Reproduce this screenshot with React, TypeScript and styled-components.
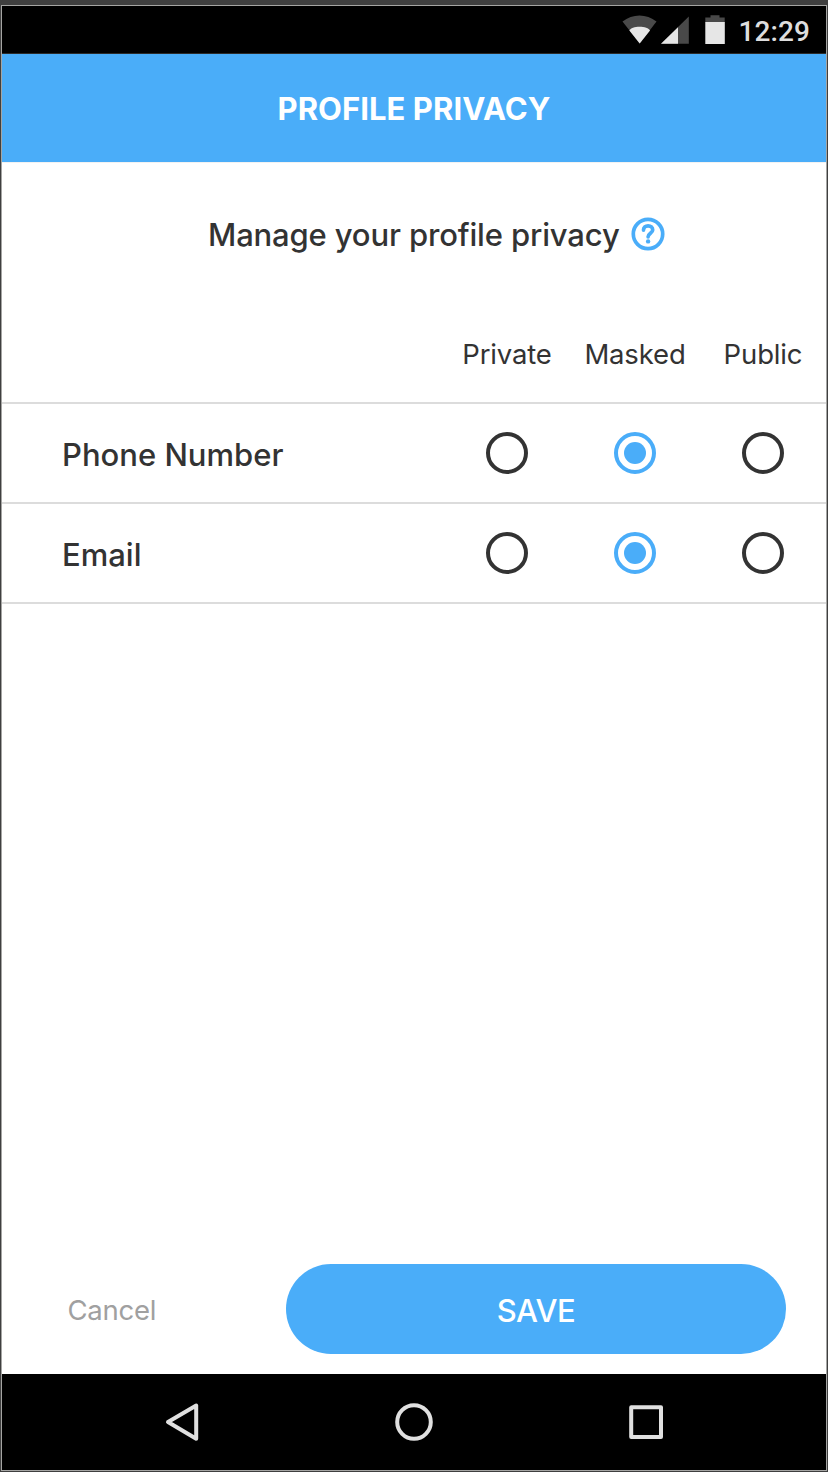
import React, { useState } from "react";
import styled, { createGlobalStyle } from "styled-components";

const BLUE = "#4aadf9";
const INK = "#333333";

const GlobalStyle = createGlobalStyle`
  * { box-sizing: border-box; }
  body { margin: 0; background: #3f3f3f; font-family: Inter, "Liberation Sans", sans-serif; color: ${INK}; }
  button { font: inherit; border: 0; padding: 0; background: none; cursor: pointer; }
`;

const Backdrop = styled.div`
  width: 828px;
  height: 1472px;
  padding: 5px 1px 1px;
  background: #3f3f3f;
  overflow: hidden;
`;

const Screen = styled.div`
  display: flex;
  flex-direction: column;
  height: 1466px;
  border: 1px solid #a5a5a3;
  background: #ffffff;
`;

const StatusBar = styled.div`
  display: flex;
  height: 48px;
  padding-left: 620px;
  background: #000000;
  border-bottom: 1px solid #2b2b2b;
`;

const Clock = styled.span`
  font-family: Roboto, sans-serif;
  font-weight: 500;
  font-size: 28px;
  line-height: 51px;
  letter-spacing: 0.1px;
  color: #dedede;
  margin-left: 10.5px;
`;

const Header = styled.header`
  display: flex;
  height: 109px;
  align-items: center;
  justify-content: center;
  background: ${BLUE};
  border-bottom: 1px solid #f2f2f2;
`;

const Label = styled.span<{ $size: number; $weight?: number; $spacing?: number; $color?: string; $drop?: number }>`
  display: block;
  font-size: ${(p) => p.$size}px;
  font-weight: ${(p) => p.$weight ?? 400};
  letter-spacing: ${(p) => p.$spacing ?? 0}px;
  color: ${(p) => p.$color ?? INK};
  line-height: 40px;
  padding-top: ${(p) => p.$drop ?? 0}px;
  white-space: nowrap;
`;

const Body = styled.main`
  display: flex;
  flex-direction: column;
  flex: 1;
`;

const Intro = styled.div`
  display: flex;
  align-items: center;
  gap: 11px;
  height: 142px;
  margin-bottom: 1px;
  padding-left: 206px;
`;

const Row = styled.div<{ $height: number }>`
  display: flex;
  align-items: center;
  justify-content: space-between;
  height: ${(p) => p.$height}px;
  padding: 0 42px 0 60px;
  border-bottom: 2px solid #dcdcdc;
`;

const Options = styled.div`
  display: flex;
  gap: 86px;
  margin-left: auto;
`;

const Cell = styled.div`
  display: flex;
  justify-content: center;
  width: 42px;
`;

const Radio = styled.button<{ $on: boolean }>`
  display: grid;
  place-items: center;
  width: 42px;
  height: 42px;
  border: 4px solid ${(p) => (p.$on ? BLUE : INK)};
  border-radius: 50%;
  &::after {
    content: "";
    width: 22px;
    height: 22px;
    border-radius: 50%;
    background: ${(p) => (p.$on ? BLUE : "transparent")};
  }
`;

const Actions = styled.div`
  display: flex;
  justify-content: space-between;
  align-items: center;
  margin-top: auto;
  padding: 0 40px 20px 65.5px;
`;

const SaveButton = styled.button`
  width: 500px;
  height: 90px;
  border-radius: 45px;
  background: ${BLUE};
`;

const NavBar = styled.nav`
  height: 96px;
  background: #000000;
`;

const StatusIcons = () => (
  <svg width="106" height="47" viewBox="622 6 106 47">
    <path d="M622.5 21.5C632.5 13.5 646.5 13.5 656.5 21.5L639.7 43.5Z" fill="#494949" />
    <path d="M629.4 30.6C631 25.5 648 25.5 650 30.6L639.7 43.5Z" fill="#e6e6e6" />
    <path d="M688.8 16.5V43.8H661Z" fill="#494949" />
    <path d="M678 27.2V43.8H661Z" fill="#e6e6e6" />
    <path d="M710.5 15.2h9v2.2h5.2v5h-19.4v-5h5.2Z" fill="#494949" />
    <rect x="705.3" y="22" width="19.5" height="22" fill="#e6e6e6" />
  </svg>
);

const HelpIcon = () => (
  <svg width="34" height="34" viewBox="0 0 34 34" fill="none" stroke={BLUE}>
    <circle cx="17" cy="17" r="14.7" strokeWidth="3.7" />
    <path d="M12.5 13.1C12.5 10.4 14.4 8.8 17.1 8.8C19.8 8.8 21.7 10.4 21.7 12.9C21.7 16.1 17.1 16.5 17.1 19.8" strokeWidth="3.7" strokeLinecap="round" />
    <circle cx="17.1" cy="24.4" r="2.2" fill={BLUE} stroke="none" />
  </svg>
);

const NavIcons = () => (
  <svg width="824" height="96" viewBox="2 1374 824 96" fill="none" stroke="#e0e0e0" strokeWidth="4" strokeLinejoin="round">
    <path d="M168 1422L196.2 1405.5V1438.8Z" />
    <circle cx="414" cy="1422" r="16.8" />
    <rect x="631.2" y="1407.2" width="29.8" height="29.8" />
  </svg>
);

const LEVELS = ["Private", "Masked", "Public"];
const FIELDS = ["Phone Number", "Email"];

export default function App() {
  const [choice, setChoice] = useState<Record<string, string>>({ "Phone Number": "Masked", Email: "Masked" });
  return (
    <Backdrop>
      <GlobalStyle />
      <Screen>
        <StatusBar>
          <StatusIcons />
          <Clock>12:29</Clock>
        </StatusBar>
        <Header>
          <Label $size={31} $weight={650} $spacing={0.05} $color="#ffffff" $drop={2}>PROFILE PRIVACY</Label>
        </Header>
        <Body>
          <Intro>
            <Label $size={31} $weight={500} $spacing={-0.15} $drop={2}>Manage your profile privacy</Label>
            <HelpIcon />
          </Intro>
          <Row $height={98}>
            <Options>
              {LEVELS.map((l) => (
                <Cell key={l}><Label $size={27.5} $spacing={-0.15}>{l}</Label></Cell>
              ))}
            </Options>
          </Row>
          {FIELDS.map((f) => (
            <Row key={f} $height={100}>
              <Label $size={31} $weight={500} $drop={3}>{f}</Label>
              <Options>
                {LEVELS.map((l) => (
                  <Radio key={l} role="radio" aria-label={`${f}: ${l}`} aria-checked={choice[f] === l} $on={choice[f] === l} onClick={() => setChoice({ ...choice, [f]: l })} />
                ))}
              </Options>
            </Row>
          ))}
          <Actions>
            <button><Label $size={27.5} $spacing={-0.25} $color="#a0a0a0" $drop={2}>Cancel</Label></button>
            <SaveButton><Label $size={31} $weight={450} $spacing={-0.4} $color="#ffffff" $drop={4}>SAVE</Label></SaveButton>
          </Actions>
        </Body>
        <NavBar><NavIcons /></NavBar>
      </Screen>
    </Backdrop>
  );
}
